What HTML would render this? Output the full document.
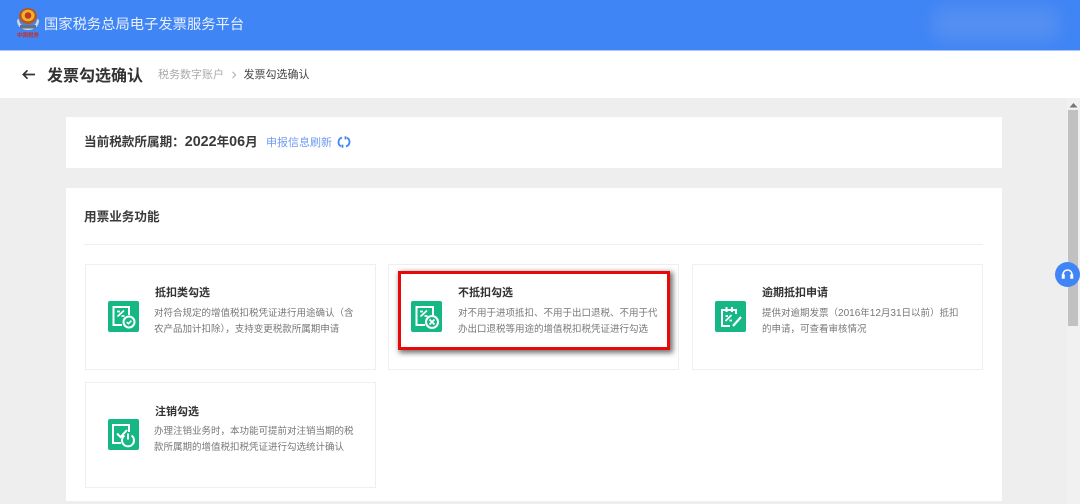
<!DOCTYPE html>
<html lang="zh">
<head>
<meta charset="utf-8">
<title>发票勾选确认</title>
<style>
*{box-sizing:border-box;margin:0;padding:0}
html,body{width:1080px;height:504px;overflow:hidden;background:#eee;font-family:"Liberation Sans","Noto Sans CJK SC",sans-serif}
.abs{position:absolute;white-space:nowrap}
#hd{position:absolute;left:0;top:0;width:1080px;height:51px;background:#4085f5;border-bottom:1px solid #a9c8f9}
#nav{position:absolute;left:0;top:51px;width:1080px;height:47px;background:#fff}
.panel{position:absolute;left:66px;width:936px;background:#fff}
.card{position:absolute;width:291px;height:106px;background:#fff;border:1px solid #efefef}
.t{position:absolute;font-size:11px;line-height:14px;font-weight:700;color:#333;white-space:nowrap;filter:blur(.25px)}
.d{position:absolute;font-size:9.500px;line-height:16px;color:#777;white-space:nowrap;filter:blur(.25px)}
.n{font-size:10px}
.b{font-size:14.300px}
</style>
</head>
<body>
<div id="hd"></div>
<div class="abs" style="left:934px;top:8px;width:124px;height:32px;background:#5590f1;filter:blur(8px);border-radius:10px"></div>
<svg class="abs" style="left:15px;top:7px;filter:blur(.3px)" width="26" height="32" viewBox="0 0 26 32">
<path d="M2 13C2 19 6 23 13 23S24 19 24 13l-2-1c0 5-4 8-9 8s-9-3-9-8z" fill="#d5d9de"/>
<rect x="5" y="18" width="16" height="3.500" fill="#66717d"/>
<ellipse cx="13" cy="9" rx="9" ry="8" fill="#b9551f"/>
<ellipse cx="13" cy="8.500" rx="6.500" ry="5.800" fill="#e8b52c"/>
<circle cx="13" cy="8.500" r="3.300" fill="#c7342a"/>
<text x="13" y="30" font-size="5.500" font-weight="700" fill="#c62f26" text-anchor="middle" font-family="'Liberation Sans','Noto Sans CJK SC',sans-serif">中国税务</text>
</svg>
<div class="abs" style="left:44px;top:15px;font-size:14.300px;line-height:20px;color:#e8f0fe;filter:blur(.25px)">国家税务总局电子发票服务平台</div>

<div id="nav"></div>
<svg class="abs" style="left:21px;top:68px" width="15" height="13" viewBox="0 0 15 13"><path d="M14 6.500H2.500M6.500 2.300L2.300 6.500 6.500 10.700" fill="none" stroke="#333" stroke-width="1.700"/></svg>
<div class="abs" style="left:47px;top:66px;font-size:16px;line-height:22px;font-weight:700;color:#333;filter:blur(.25px)">发票勾选确认</div>
<div class="abs" style="left:158px;top:67px;font-size:11px;line-height:16px;color:#aaa;filter:blur(.25px)">税务数字账户</div>
<svg class="abs" style="left:231px;top:71px" width="6" height="8" viewBox="0 0 6 8"><path d="M1.500 .8L4.600 4 1.500 7.200" fill="none" stroke="#aaa" stroke-width="1"/></svg>
<div class="abs" style="left:243.500px;top:67px;font-size:11px;line-height:16px;color:#444;filter:blur(.25px)">发票勾选确认</div>

<div class="panel" style="top:117px;height:51px"></div>
<div class="abs" style="left:84px;top:133px;font-size:12.600px;line-height:18px;font-weight:700;color:#3a3a3a;filter:blur(.25px)">当前税款所属期：<span class="b">2022</span>年<span class="b">06</span>月</div>
<div class="abs" style="left:266px;top:135px;font-size:11px;line-height:16px;color:#6f9bf0;filter:blur(.25px)">申报信息刷新</div>
<svg class="abs" style="left:337px;top:135px" width="14" height="14" viewBox="0 0 14 14" fill="none" stroke="#4085f5" stroke-width="1.800"><path d="M5 2.500C2.800 3.200 1.500 5 1.500 7.200c0 1.800 1 3.300 2.500 4.200"/><path d="M9 11.500c2.200-.7 3.500-2.500 3.500-4.700 0-1.800-1-3.300-2.500-4.200"/><path d="M8.500 1.200v3.200M5.500 12.800V9.600"/></svg>

<div class="panel" style="top:188px;height:313px"></div>
<div class="abs" style="left:84px;top:208px;font-size:12.600px;line-height:18px;font-weight:700;color:#3a3a3a;filter:blur(.25px)">用票业务功能</div>
<div class="abs" style="left:84px;top:244px;width:899px;height:1px;background:#efefef"></div>

<div class="card" style="left:85px;top:264px"></div>
<div class="card" style="left:388px;top:264px"></div>
<div class="card" style="left:692px;top:264px"></div>
<div class="card" style="left:85px;top:382px"></div>

<!-- red highlight -->
<div class="abs" style="left:398px;top:271px;width:272px;height:79px;border:3px solid #e80808;box-shadow:2px 2px 5px 1px rgba(0,0,0,.55)"></div>

<!-- card 1 -->
<svg class="abs" style="left:108px;top:301px" width="31" height="31" viewBox="0 0 31 31" fill="none" stroke="#fff" stroke-width="2">
<rect width="31" height="31" rx="2" fill="#15b884" stroke="none"/>
<path d="M14 24H5.500V6H21v8"/><path d="M9.500 15.500L16 9.500M9 10.500h3M13.500 15h3" stroke-width="1.700"/>
<circle cx="21" cy="21" r="5.500" fill="#15b884"/><path d="M18.600 21l1.800 1.700 3-3" stroke-width="1.500"/>
</svg>
<div class="t" style="left:155px;top:286px">抵扣类勾选</div>
<div class="d" style="left:154px;top:306px">对符合规定的增值税扣税凭证进行用途确认（含<br>农产品加计扣除），支持变更税款所属期申请</div>

<!-- card 2 -->
<svg class="abs" style="left:411px;top:301px" width="31" height="31" viewBox="0 0 31 31" fill="none" stroke="#fff" stroke-width="2">
<rect width="31" height="31" rx="2" fill="#15b884" stroke="none"/>
<path d="M14 24H5.500V6H22v8"/><path d="M9.500 15.500L16 9.500M9 10.500h3M13.500 15h3" stroke-width="1.700"/>
<circle cx="21" cy="21" r="6" fill="#15b884"/><path d="M18.500 18.500l5 5M23.500 18.500l-5 5" stroke-width="1.800"/>
</svg>
<div class="t" style="left:458px;top:286px">不抵扣勾选</div>
<div class="d" style="left:458px;top:306px">对不用于进项抵扣、不用于出口退税、不用于代<br>办出口退税等用途的增值税扣税凭证进行勾选</div>

<!-- card 3 -->
<svg class="abs" style="left:715px;top:301px" width="31" height="31" viewBox="0 0 31 31" fill="none" stroke="#fff" stroke-width="2">
<rect width="31" height="31" rx="2" fill="#15b884" stroke="none"/>
<path d="M15 25H7V9h14v4"/><path d="M11.500 6v5M17 6v5"/><path d="M10.500 20l6-6M10.500 15h2.500M14.500 19.500H17" stroke-width="1.700"/><path d="M18 25l8-9" stroke-width="2.200"/>
</svg>
<div class="t" style="left:762px;top:286px">逾期抵扣申请</div>
<div class="d" style="left:762px;top:306px">提供对逾期发票（<span class="n">2016</span>年<span class="n">12</span>月<span class="n">31</span>日以前）抵扣<br>的申请，可查看审核情况</div>

<!-- card 4 -->
<svg class="abs" style="left:108px;top:419px" width="31" height="31" viewBox="0 0 31 31" fill="none" stroke="#fff" stroke-width="2">
<rect width="31" height="31" rx="2" fill="#15b884" stroke="none"/>
<path d="M13 24H5V6h16v7"/><path d="M9 14.500l3.500 3.500L19 11"/>
<path d="M16.500 16.500a6 6 0 1 0 7 0" stroke-width="2"/><path d="M20 14.500v6" stroke-width="2"/>
</svg>
<div class="t" style="left:155px;top:405px">注销勾选</div>
<div class="d" style="left:154px;top:424px">办理注销业务时，本功能可提前对注销当期的税<br>款所属期的增值税扣税凭证进行勾选统计确认</div>

<!-- scrollbar -->
<div class="abs" style="left:1067px;top:98px;width:13px;height:406px;background:#f1f1f1"></div>
<svg class="abs" style="left:1069px;top:102px" width="9" height="6" viewBox="0 0 9 6"><path d="M4.500 1L8.500 5.500H.5z" fill="#777"/></svg>
<div class="abs" style="left:1068px;top:110px;width:10px;height:216px;background:#c1c1c1"></div>

<!-- support button -->
<div class="abs" style="left:1055px;top:262px;width:25px;height:25px;border-radius:50%;background:#4085f5"></div>
<svg class="abs" style="left:1061px;top:268px" width="13" height="13" viewBox="0 0 13 13" fill="none" stroke="#fff" stroke-width="1.500"><path d="M2 9V6.500a4.500 4.500 0 0 1 9 0V9"/><rect x="1.500" y="7" width="1.500" height="3" fill="#fff"/><rect x="10" y="7" width="1.500" height="3" fill="#fff"/></svg>
</body>
</html>
